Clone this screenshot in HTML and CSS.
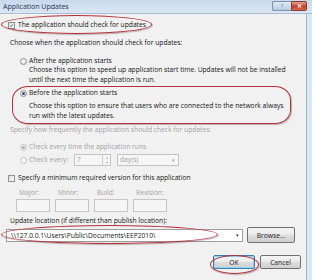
FILE: index.html
```html
<!DOCTYPE html>
<html>
<head>
<meta charset="utf-8">
<link rel="stylesheet" href="styles.css">
</head>
<body>
<div class="window">
  <div class="titlebar">
    <span class="title">Application Updates</span>
    <div class="caption">
      <span class="cap-btn help">?</span>
      <span class="cap-btn close">✕</span>
    </div>
  </div>
  <div class="client">
    <div class="row cb-row first">
      <span class="check checked"><svg viewBox="0 0 8 8" width="8" height="8"><path d="M1.8 4.2 L3.4 5.8 L6.3 2" fill="none" stroke="#2d4a7c" stroke-width="1.2"/></svg></span>
      <span>The application should check for updates</span>
    </div>
    <div class="row group-label choose">Choose when the application should check for updates:</div>
    <div class="row radio-row after">
      <span class="radio"></span>
      <span>After the application starts</span>
    </div>
    <div class="desc desc-after">Choose this option to speed up application start time. Updates will not be installed until the next time the application is run.</div>
    <div class="row radio-row before">
      <span class="radio on"></span>
      <span>Before the application starts</span>
    </div>
    <div class="desc desc-before">Choose this option to ensure that users who are connected to the network always run with the latest updates.</div>
    <div class="row group-label disabled freq">Specify how frequently the application should check for updates:</div>
    <div class="row radio-row disabled every-time">
      <span class="radio on dis"></span>
      <span>Check every time the application runs</span>
    </div>
    <div class="row radio-row disabled every">
      <span class="radio dis"></span>
      <span class="every-label">Check every:</span>
      <span class="spin"><span class="spin-val">7</span><span class="spin-btns"><span>▴</span><span>▾</span></span></span>
      <span class="combo-small"><span>day(s)</span><span class="arrow">▾</span></span>
    </div>
    <div class="row cb-row minver">
      <span class="check"></span>
      <span>Specify a minimum required version for this application</span>
    </div>
    <div class="versions disabled">
      <div class="ver"><span class="ver-label">Major:</span><span class="ver-box"></span></div>
      <div class="ver"><span class="ver-label">Minor:</span><span class="ver-box"></span></div>
      <div class="ver"><span class="ver-label">Build:</span><span class="ver-box"></span></div>
      <div class="ver"><span class="ver-label">Revision:</span><span class="ver-box"></span></div>
    </div>
    <div class="row group-label update-label">Update location (if different than publish location):</div>
    <div class="location-row">
      <div class="location"><span>\\127.0.0.1\Users\Public\Documents\EEP2010\</span><span class="arrow dark">▾</span></div>
      <span class="btn browse">Browse...</span>
    </div>
    <div class="footer">
      <span class="btn ok">OK</span>
      <span class="btn cancel">Cancel</span>
    </div>
  </div>
  <span class="oval o1"></span>
  <span class="oval o2"></span>
  <span class="oval o3"></span>
  <span class="oval o4"></span>
</div>
</body>
</html>
```
FILE: styles.css
```css
* { box-sizing: border-box; }
html, body { margin: 0; padding: 0; background: #ffffff; }
body {
  font-family: "Open Sans", "Noto Sans", sans-serif;
  font-size: 6.7px;
  color: #141414;
}
.window {
  position: relative;
  width: 312px;
  height: 280px;
  background: #dbe7f3;
  overflow: hidden;
}
.titlebar {
  height: 14px;
  display: flex;
  align-items: center;
  justify-content: space-between;
  padding: 0 5px 0 3px;
  background: linear-gradient(#c8d9ec, #dbe6f2);
  border-bottom: 1px solid #a9bdd3;
}
.title { color: #1d3557; font-size: 7px; line-height: 12px; }
.caption { display: flex; align-self: flex-start; margin-top: 1px; }
.cap-btn {
  height: 10px;
  display: flex;
  align-items: center;
  justify-content: center;
  font-size: 6px;
  color: #fff;
  border: 1px solid #7d93ad;
}
.help { width: 19px; background: linear-gradient(#dfe9f4, #b9cde3); color: #6d84a0; border-right: none; border-radius: 2px 0 0 2px; }
.close { width: 16px; background: linear-gradient(#e5a08e, #c6402c 55%, #d96a4f); border-color: #8c3a2e; border-radius: 0 2px 2px 0; font-size: 6px; font-weight: bold; }
.client {
  height: 266px;
  width: 307px;
  background: #f1f1f1;
  border-right: 1px solid #9fb2c7;
  display: flex;
  flex-direction: column;
  align-items: flex-start;
}
.row { display: flex; align-items: center; height: 10px; line-height: 10px; white-space: nowrap; }
.cb-row { padding-left: 8px; gap: 3px; }
.first { margin-top: 6px; }
.group-label { padding-left: 10px; }
.choose { margin-top: 8px; }
.radio-row { padding-left: 20px; gap: 2px; }
.after { margin-top: 8px; }
.desc { padding-left: 29px; width: 292px; line-height: 10px; }
.desc-after { margin-top: -1px; }
.before { margin-top: 3px; }
.desc-before { margin-top: 3px; }
.freq { margin-top: 4px; }
.every-time { margin-top: 7px; }
.every { margin-top: 2px; height: 12px; }
.minver { margin-top: 7px; }
.update-label { margin-top: 4px; }
.disabled { color: #a3a3a3; }
.check {
  width: 7px; height: 7px;
  border: 1px solid #8e8f8f;
  background: linear-gradient(135deg, #dcdcdc, #fbfbfb);
  display: inline-flex; align-items: center; justify-content: center;
}
.check svg { display: block; width: 7px; height: 7px; }
.radio {
  width: 7px; height: 7px; border-radius: 50%;
  border: 1px solid #8e8f8f;
  background: radial-gradient(circle at 40% 35%, #ffffff, #d8d8d8);
  display: inline-flex; align-items: center; justify-content: center;
}
.radio.on::after { content: ""; width: 3px; height: 3px; border-radius: 50%; background: #2f4d73; }
.radio.dis { border-color: #c3c3c3; background: #f4f4f4; }
.radio.on.dis::after { background: #a9a9a9; }
.every-label { width: 43px; }
.spin {
  display: flex; height: 12px; width: 37px;
  border: 1px solid #c4c4c4; background: #f6f6f6;
}
.spin-val { flex: 1; padding-left: 2px; line-height: 10px; }
.spin-btns { width: 8px; display: flex; flex-direction: column; border-left: 1px solid #d0d0d0; font-size: 4px; line-height: 5px; text-align: center; color: #b0b0b0; }
.combo-small {
  margin-left: 4px; width: 62px; height: 12px;
  border: 1px solid #c4c4c4; background: #f6f6f6;
  display: flex; justify-content: space-between; align-items: center;
  padding: 0 3px 0 2px;
}
.arrow { font-size: 5px; color: #a8a8a8; }
.arrow.dark { color: #333; }
.versions { display: flex; gap: 5px; padding-left: 16px; margin-top: 5px; }
.ver { display: flex; flex-direction: column; width: 34px; }
.ver-label { height: 10px; line-height: 10px; padding-left: 3px; }
.ver-box { height: 13px; margin-top: 1px; border: 1px solid #c6c6c6; background: #f5f5f5; }
.location-row { display: flex; align-items: center; padding-left: 6px; margin-top: 0px; height: 18px; }
.location {
  width: 237px; height: 13px;
  border: 1px solid #9c9c9c; background: #ffffff;
  display: flex; justify-content: space-between; align-items: center;
  padding: 0 3px 0 4px; white-space: nowrap;
}
.btn {
  display: inline-flex; align-items: center; justify-content: center;
  border: 1px solid #707070; border-radius: 2px;
  background: linear-gradient(#f4f4f4 0%, #ececec 45%, #dddddd 50%, #d0d0d0 100%);
  color: #1c1c1c; height: 16px;
}
.browse { width: 48px; margin-left: 4px; }
.footer { display: flex; gap: 5px; align-self: flex-end; margin-right: 5px; margin-top: 11px; }
.ok { width: 42px; height: 14px; border-color: #3c7fb1; box-shadow: inset 0 0 0 1px #8fd3f1; }
.cancel { width: 41px; height: 14px; }
.oval {
  position: absolute;
  border: 1.5px solid #b3313b;
  box-shadow: 1px 1px 1px rgba(90, 60, 60, 0.35);
}
.o1 { left: 1px; top: 15px; width: 151px; height: 19px; border-radius: 50% / 50%; }
.o2 { left: 12px; top: 86px; width: 279px; height: 38px; border-radius: 16px / 14px; }
.o3 { left: 1px; top: 225px; width: 217px; height: 19px; border-radius: 50% / 50%; }
.o4 { left: 210px; top: 255px; width: 49px; height: 19px; border-radius: 50% / 50%; }
```
